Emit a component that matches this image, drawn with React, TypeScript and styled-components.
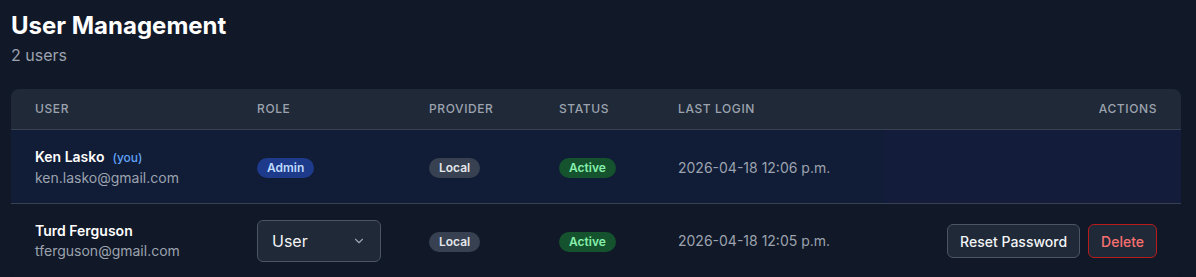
import React from "react";
import styled, { createGlobalStyle } from "styled-components";

const GlobalStyle = createGlobalStyle`
  html, body { margin: 0; padding: 0; background: #111827; }
  body { font-family: Inter, "Noto Sans", sans-serif; color: #f3f4f6; }
  * { box-sizing: border-box; }
`;

const Page = styled.div`
  padding: 10px 15px 0 11px;
`;

const Title = styled.h1`
  margin: 0;
  font-size: 24px;
  line-height: 32px;
  font-weight: 700;
  color: #ffffff;
`;

const Subtitle = styled.div`
  font-size: 16px;
  line-height: 24px;
  color: #9ca3af;
  margin-top: 1px;
`;

const Card = styled.div`
  margin-top: 22px;
  border-radius: 8px;
  overflow: hidden;
  background: #111827;
`;

const Table = styled.table`
  width: 100%;
  border-collapse: collapse;
  table-layout: fixed;
`;

const HeadRow = styled.tr`
  background: #1f2937;
  border-bottom: 1px solid #374151;
`;

const Th = styled.th<{ $right?: boolean }>`
  padding: 12px 24px;
  font-size: 12px;
  line-height: 16px;
  font-weight: 500;
  letter-spacing: 0.05em;
  text-transform: uppercase;
  color: #9ca3af;
  text-align: ${(p) => (p.$right ? "right" : "left")};
`;

const Row = styled.tr<{ $current?: boolean }>`
  background: ${(p) => (p.$current ? "#111c36" : "transparent")};
  border-bottom: 1px solid #374151;
  & > td {
    padding: ${(p) => (p.$current ? "17px 24px 15px" : "16px 24px")};
  }
`;

const Td = styled.td<{ $right?: boolean; $tint?: boolean }>`
  font-size: 14px;
  line-height: 20px;
  vertical-align: middle;
  text-align: ${(p) => (p.$right ? "right" : "left")};
  background: ${(p) => (p.$tint ? "#131d3b" : "transparent")};
`;

const Name = styled.div`
  font-weight: 600;
  color: #ffffff;
  font-size: 14px;
  line-height: 20px;
`;

const You = styled.span`
  margin-left: 8px;
  font-size: 12px;
  font-weight: 500;
  color: #60a5fa;
`;

const Email = styled.div`
  color: #9ca3af;
  font-size: 14px;
  line-height: 20px;
`;

const Badge = styled.span<{ $bg: string; $fg: string }>`
  display: inline-block;
  padding: 2px 10px;
  border-radius: 9999px;
  font-size: 12px;
  line-height: 16px;
  font-weight: 600;
  background: ${(p) => p.$bg};
  color: ${(p) => p.$fg};
`;

const DateText = styled.span`
  color: #9ca3af;
  font-size: 14px;
`;

const SelectBox = styled.div`
  display: flex;
  align-items: center;
  justify-content: space-between;
  width: 124px;
  height: 42px;
  padding: 0 14px 0 14px;
  border: 1px solid #4b5563;
  border-radius: 6px;
  background: #1f2937;
  color: #f3f4f6;
  font-size: 16px;
`;

const Actions = styled.div`
  display: flex;
  justify-content: flex-end;
  gap: 8px;
`;

const Button = styled.button<{ $danger?: boolean }>`
  height: 34px;
  padding: 0 12px;
  border-radius: 6px;
  border: 1px solid ${(p) => (p.$danger ? "#b91c1c" : "#4b5563")};
  background: #1f2937;
  color: ${(p) => (p.$danger ? "#f87171" : "#f3f4f6")};
  font-family: Inter, "Noto Sans", sans-serif;
  font-size: 14px;
  font-weight: 500;
  cursor: pointer;
`;

const Chevron = () => (
  <svg width="14" height="14" viewBox="0 0 24 24" fill="none" stroke="#9ca3af" strokeWidth="2" strokeLinecap="round" strokeLinejoin="round">
    <path d="m6 9 6 6 6-6" />
  </svg>
);

export default function App() {
  return (
    <>
      <GlobalStyle />
      <Page>
        <Title>User Management</Title>
        <Subtitle>2 users</Subtitle>
        <Card>
          <Table>
            <colgroup>
              <col style={{ width: 222 }} />
              <col style={{ width: 172 }} />
              <col style={{ width: 130 }} />
              <col style={{ width: 119 }} />
              <col style={{ width: 230 }} />
              <col />
            </colgroup>
            <thead>
              <HeadRow>
                <Th>User</Th>
                <Th>Role</Th>
                <Th>Provider</Th>
                <Th>Status</Th>
                <Th>Last Login</Th>
                <Th $right>Actions</Th>
              </HeadRow>
            </thead>
            <tbody>
              <Row $current>
                <Td>
                  <Name>
                    Ken Lasko<You>(you)</You>
                  </Name>
                  <Email>ken.lasko@gmail.com</Email>
                </Td>
                <Td>
                  <Badge $bg="#1e3a8a" $fg="#bfdbfe">Admin</Badge>
                </Td>
                <Td>
                  <Badge $bg="#374151" $fg="#e5e7eb">Local</Badge>
                </Td>
                <Td>
                  <Badge $bg="#14532d" $fg="#86efac">Active</Badge>
                </Td>
                <Td>
                  <DateText>2026-04-18 12:06 p.m.</DateText>
                </Td>
                <Td $right $tint />
              </Row>
              <Row>
                <Td>
                  <Name>Turd Ferguson</Name>
                  <Email>tferguson@gmail.com</Email>
                </Td>
                <Td>
                  <SelectBox>
                    <span>User</span>
                    <Chevron />
                  </SelectBox>
                </Td>
                <Td>
                  <Badge $bg="#374151" $fg="#e5e7eb">Local</Badge>
                </Td>
                <Td>
                  <Badge $bg="#14532d" $fg="#86efac">Active</Badge>
                </Td>
                <Td>
                  <DateText>2026-04-18 12:05 p.m.</DateText>
                </Td>
                <Td $right>
                  <Actions>
                    <Button>Reset Password</Button>
                    <Button $danger>Delete</Button>
                  </Actions>
                </Td>
              </Row>
            </tbody>
          </Table>
        </Card>
      </Page>
    </>
  );
}
